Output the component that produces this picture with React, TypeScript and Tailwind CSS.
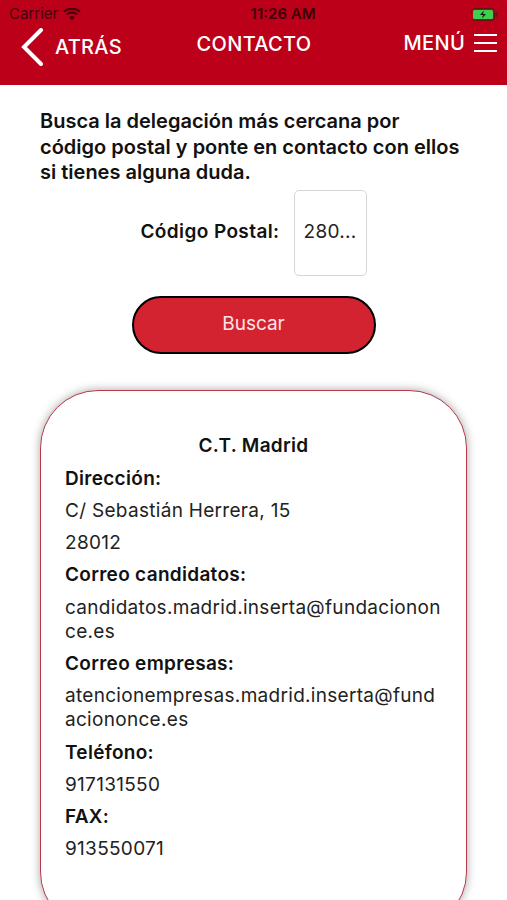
import React from 'react';

const font = { fontFamily: 'Inter, "Noto Sans", sans-serif' };

const StatusBar: React.FC = () => (
  <div className="flex h-[28px] items-center justify-between px-[9px] text-[15px] text-[#4a0008]">
    <div className="flex items-center gap-[5px]">
      <span>Carrier</span>
      <svg width="18" height="13" viewBox="0 0 18 13">
        <path d="M9 12.5 L6.2 9.3 A4 4 0 0 1 11.8 9.3 Z" fill="#4a0008" />
        <path d="M3.6 6.6 A7.6 7.6 0 0 1 14.4 6.6" stroke="#4a0008" strokeWidth="2.2" fill="none" />
        <path d="M1 3.8 A11.5 11.5 0 0 1 17 3.8" stroke="#4a0008" strokeWidth="2.2" fill="none" />
      </svg>
    </div>
    <span className="font-semibold text-[15px] text-[#3a0006] ml-[14px]">11:26 AM</span>
    <svg width="27" height="13" viewBox="0 0 27 13">
      <rect x="0.5" y="0.5" width="23" height="12" rx="3" fill="none" stroke="#6a1018" />
      <rect x="2" y="2" width="20" height="9" rx="1.5" fill="#3fcf4e" />
      <rect x="24.5" y="4" width="2" height="5" rx="1" fill="#6a1018" />
      <path d="M13 2.5 L9 7 H12 L11 10.5 L15 6 H12 Z" fill="#1a1a1a" />
    </svg>
  </div>
);

const NavBar: React.FC = () => (
  <div className="grid h-[57px] grid-cols-[1fr_auto_1fr] items-start pl-[20px] pr-[9px] text-white">
    <div className="flex items-center gap-[11px]">
      <svg width="24" height="38" viewBox="0 0 24 38">
        <path d="M21 2 L4 19 L21 36" stroke="white" strokeWidth="4" fill="none" strokeLinecap="round" />
      </svg>
      <span className="text-[20px] font-medium tracking-[0.3px]">ATRÁS</span>
    </div>
    <span className="mt-[1px] pr-[10px] text-[20px] font-medium tracking-[0.3px]">CONTACTO</span>
    <div className="flex items-center justify-end gap-[8px]">
      <span className="text-[20px] font-medium tracking-[0.3px]">MENÚ</span>
      <svg width="25" height="20" viewBox="0 0 25 20">
        <path d="M1 2 H24 M1 10 H24 M1 18 H24" stroke="white" strokeWidth="2" />
      </svg>
    </div>
  </div>
);

const rows: { label: string; value: string }[] = [
  { label: 'Dirección:', value: 'C/ Sebastián Herrera, 15\n28012' },
  { label: 'Correo candidatos:', value: 'candidatos.madrid.inserta@fundaciononce.es' },
  { label: 'Correo empresas:', value: 'atencionempresas.madrid.inserta@fundaciononce.es' },
  { label: 'Teléfono:', value: '917131550' },
  { label: 'FAX:', value: '913550071' },
];

const App: React.FC = () => {
  return (
    <div className="min-h-[900px] w-[507px] overflow-hidden bg-white" style={font}>
      <header className="h-[85px] bg-[#bd0019]">
        <StatusBar />
        <NavBar />
      </header>

      <main className="px-[40px] pt-[24px]">
        <p className="text-[20px] font-semibold leading-[25.5px] text-[#111]">
          Busca la delegación más cercana por código postal y ponte en contacto con ellos si tienes alguna duda.
        </p>

        <div className="mt-[4px] flex items-center justify-center gap-[14px]">
          <span className="text-[19px] font-semibold tracking-[0.4px] text-[#111]">Código Postal:</span>
          <div className="flex h-[86px] w-[73px] items-center justify-center rounded-[5px] border border-[#d6d6d6] text-[19px] tracking-[0.3px] text-[#222]">
            280...
          </div>
        </div>

        <div className="mt-[20px] flex justify-center">
          <button className="h-[58px] w-[244px] rounded-full border-2 border-black bg-[#d32330] text-[19px] text-[#ffe4e6]">
            Buscar
          </button>
        </div>

        <div className="mt-[36px] min-h-[540px] rounded-[58px] border border-[#b73a48] bg-white px-[24px] pt-[43px] shadow-[0_0_10px_rgba(0,0,0,0.35)]">
          <h2 className="text-center text-[19px] font-semibold leading-[24px] tracking-[0.3px] text-[#111]">C.T. Madrid</h2>
          <div className="mt-[9px] flex flex-col gap-[8.3px] text-[19px] leading-[24px] tracking-[0.3px] text-[#222]">
            {rows.map((row) => (
              <React.Fragment key={row.label}>
                <div className="font-semibold text-[#111]">{row.label}</div>
                {row.value.split('\n').map((v) => (
                  <div key={v} className="break-all">
                    {v}
                  </div>
                ))}
              </React.Fragment>
            ))}
          </div>
        </div>
      </main>
    </div>
  );
};

export default App;
